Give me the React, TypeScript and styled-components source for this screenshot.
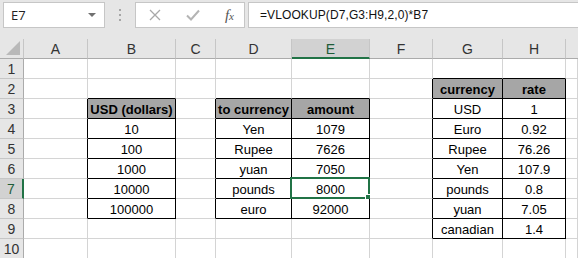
import React from 'react';
import styled, { createGlobalStyle } from 'styled-components';

const GlobalStyle = createGlobalStyle`
  body {
    margin: 0;
    background: #ffffff;
    font-family: 'Liberation Sans', Arial, sans-serif;
  }
`;

const COLS = ['A', 'B', 'C', 'D', 'E', 'F', 'G', 'H', 'I'];
const COL_WIDTHS = [64, 88, 40, 76, 78, 63, 70, 63];
const ROW_COUNT = 10;
const ACTIVE = { col: 4, row: 7 };

type Table = { c1: number; c2: number; r1: number; r2: number };

const tables: Table[] = [
  { c1: 1, c2: 1, r1: 3, r2: 8 },
  { c1: 3, c2: 4, r1: 3, r2: 8 },
  { c1: 6, c2: 7, r1: 2, r2: 9 },
];

const values: Record<string, string> = {
  B3: 'USD (dollars)',
  B4: '10',
  B5: '100',
  B6: '1000',
  B7: '10000',
  B8: '100000',
  D3: 'to currency',
  E3: 'amount',
  D4: 'Yen',
  D5: 'Rupee',
  D6: 'yuan',
  D7: 'pounds',
  D8: 'euro',
  E4: '1079',
  E5: '7626',
  E6: '7050',
  E7: '8000',
  E8: '92000',
  G2: 'currency',
  H2: 'rate',
  G3: 'USD',
  G4: 'Euro',
  G5: 'Rupee',
  G6: 'Yen',
  G7: 'pounds',
  G8: 'yuan',
  G9: 'canadian',
  H3: '1',
  H4: '0.92',
  H5: '76.26',
  H6: '107.9',
  H7: '0.8',
  H8: '7.05',
  H9: '1.4',
};

const tableAt = (c: number, r: number) =>
  tables.find((t) => c >= t.c1 && c <= t.c2 && r >= t.r1 && r <= t.r2);

const App = () => {
  const rows = Array.from({ length: ROW_COUNT }, (_, i) => i + 1);

  return (
    <>
      <GlobalStyle />
      <Window>
        <FormulaBar>
          <NameBox>
            <span>E7</span>
            <DropArrow />
          </NameBox>
          <Grip>
            <i />
            <i />
            <i />
          </Grip>
          <ActionBox>
            <svg width="12" height="12" viewBox="0 0 12 12">
              <path d="M1 1 L11 11 M11 1 L1 11" stroke="#a8a8a8" strokeWidth="1.3" fill="none" />
            </svg>
            <svg width="14" height="12" viewBox="0 0 14 12">
              <path d="M1 6.5 L5 10.5 L13 1.5" stroke="#b4b4b4" strokeWidth="2" fill="none" />
            </svg>
            <Fx>
              f<small>x</small>
            </Fx>
          </ActionBox>
          <FormulaInput>=VLOOKUP(D7,G3:H9,2,0)*B7</FormulaInput>
        </FormulaBar>

        <Sheet>
          <Corner>
            <svg width="14" height="14" viewBox="0 0 14 14">
              <path d="M14 0 L14 14 L0 14 Z" fill="#b9b9b9" />
            </svg>
          </Corner>
          {COLS.map((col, c) => (
            <ColHeader key={col} $selected={c === ACTIVE.col} $last={c === COLS.length - 1}>
              {c < COLS.length - 1 ? col : ''}
            </ColHeader>
          ))}

          {rows.map((r) => (
            <React.Fragment key={r}>
              <RowHeader $selected={r === ACTIVE.row}>{r}</RowHeader>
              {COLS.map((col, c) => {
                const t = tableAt(c, r);
                const rightDark = !!t || !!tableAt(c + 1, r);
                const bottomDark = !!t || !!tableAt(c, r + 1);
                const isHead = !!t && r === t.r1;
                return (
                  <Cell
                    key={col + r}
                    $rightDark={rightDark}
                    $bottomDark={bottomDark}
                    $head={isHead}
                  >
                    {values[col + r] ?? ''}
                    {c === ACTIVE.col && r === ACTIVE.row && (
                      <ActiveFrame>
                        <FillHandle />
                      </ActiveFrame>
                    )}
                  </Cell>
                );
              })}
            </React.Fragment>
          ))}
        </Sheet>
      </Window>
    </>
  );
};

export default App;

const Window = styled.div`
  width: 578px;
  height: 258px;
  overflow: hidden;
  background: #ffffff;
`;

const FormulaBar = styled.div`
  display: flex;
  align-items: center;
  height: 39px;
  padding: 0 0 10px 3px;
  box-sizing: border-box;
  background: #e6e6e6;
`;

const Box = styled.div`
  height: 26px;
  box-sizing: border-box;
  background: #ffffff;
  border: 1px solid #c6c6c6;
  display: flex;
  align-items: center;
`;

const NameBox = styled(Box)`
  width: 102px;
  padding: 0 0 0 7px;
  justify-content: space-between;
  font-family: 'Open Sans', 'Liberation Sans', sans-serif;
  font-size: 13px;
  color: #222222;
`;

const DropArrow = styled.div`
  width: 0;
  height: 0;
  margin-right: 8px;
  border-left: 4px solid transparent;
  border-right: 4px solid transparent;
  border-top: 4px solid #707070;
`;

const Grip = styled.div`
  width: 30px;
  display: flex;
  flex-direction: column;
  align-items: center;
  gap: 3px;

  i {
    display: block;
    width: 2px;
    height: 2px;
    background: #a6a6a6;
  }
`;

const ActionBox = styled(Box)`
  width: 110px;
  padding: 0 10px 0 13px;
  justify-content: space-between;
`;

const Fx = styled.span`
  display: flex;
  align-items: baseline;
  padding-top: 2px;
  font-family: 'Liberation Serif', 'Times New Roman', serif;
  font-style: italic;
  font-size: 15px;
  line-height: 16px;
  color: #555555;

  small {
    font-size: 11px;
    margin-left: 0px;
  }
`;

const FormulaInput = styled(Box)`
  flex: 1;
  margin-left: 3px;
  border-right: none;
  padding-left: 11px;
  font-size: 12px;
  letter-spacing: 0.1px;
  color: #111111;
`;

const Sheet = styled.div`
  display: grid;
  grid-template-columns: 24px ${COL_WIDTHS.map((w) => `${w}px`).join(' ')} 1fr;
  grid-auto-rows: 20px;
  font-size: 13px;
`;

const HeaderBase = styled.div`
  box-sizing: border-box;
  display: flex;
  align-items: center;
  justify-content: center;
  background: #e6e6e6;
  color: #333333;
  font-size: 14px;
`;

const Corner = styled(HeaderBase)`
  justify-content: flex-end;
  align-items: flex-end;
  padding: 0 3px 3px 0;
  border-right: 1px solid #c6c6c6;
  border-bottom: 1px solid #ababab;
`;

const ColHeader = styled(HeaderBase)<{ $selected: boolean; $last: boolean }>`
  padding-top: 1px;
  border-right: ${({ $last }) => ($last ? 'none' : '1px solid #c6c6c6')};
  border-bottom: ${({ $selected }) => ($selected ? '2px solid #217346' : '1px solid #ababab')};
  background: ${({ $selected }) => ($selected ? '#d2d2d2' : '#e6e6e6')};
  color: ${({ $selected }) => ($selected ? '#1f5c38' : '#333333')};
`;

const RowHeader = styled(HeaderBase)<{ $selected: boolean }>`
  padding-top: 1px;
  border-bottom: 1px solid #c6c6c6;
  border-right: ${({ $selected }) => ($selected ? '2px solid #217346' : '1px solid #ababab')};
  background: ${({ $selected }) => ($selected ? '#d2d2d2' : '#e6e6e6')};
  color: ${({ $selected }) => ($selected ? '#1f5c38' : '#333333')};
`;

const Cell = styled.div<{ $rightDark: boolean; $bottomDark: boolean; $head: boolean }>`
  position: relative;
  box-sizing: border-box;
  display: flex;
  align-items: center;
  justify-content: center;
  padding-top: 2px;
  white-space: nowrap;
  color: #000000;
  font-weight: ${({ $head }) => ($head ? 700 : 400)};
  background: ${({ $head }) => ($head ? '#a6a6a6' : '#ffffff')};
  border-right: 1px solid ${({ $rightDark }) => ($rightDark ? '#000000' : '#d4d4d4')};
  border-bottom: 1px solid ${({ $bottomDark }) => ($bottomDark ? '#000000' : '#d4d4d4')};
`;

const ActiveFrame = styled.div`
  position: absolute;
  top: -2px;
  left: -2px;
  right: -1px;
  bottom: -1px;
  border: 2px solid #217346;
  pointer-events: none;
`;

const FillHandle = styled.div`
  position: absolute;
  right: -4px;
  bottom: -4px;
  width: 5px;
  height: 5px;
  background: #217346;
  border: 1px solid #ffffff;
`;
